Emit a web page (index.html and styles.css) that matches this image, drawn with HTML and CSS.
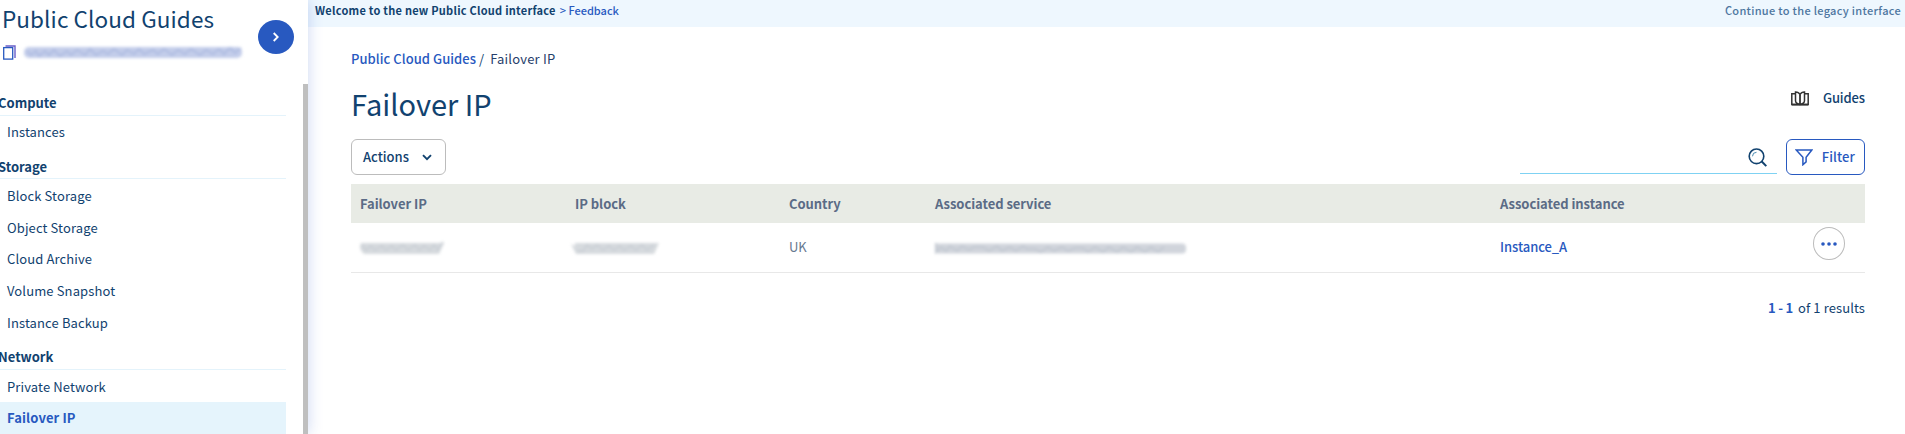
FILE: index.html
```html
<!DOCTYPE html>
<html lang="en">
<head>
<meta charset="utf-8">
<title>Failover IP</title>
<link rel="stylesheet" href="styles.css">
</head>
<body>
<div class="app">
  <aside class="sidebar">
    <header class="project">
      <div class="project-info">
        <div class="project-name">Public Cloud Guides</div>
        <div class="project-id">
          <svg class="copy-icon" width="13" height="15" viewBox="0 0 13 15" fill="none"><path d="M2.500 1h9.500v12" stroke="#6a5fc9" stroke-width="1.400"/><rect x=".7" y="2.600" width="9" height="11.500" stroke="#2859c0" stroke-width="1.300"/></svg>
          <svg class="masked" width="218" height="12" viewBox="0 0 218 12"><rect width="218" height="11" rx="5" fill="#c3cdea"/><path d="M3 4l4 4 5-4 3 5 6-5 4 4 5-5 6 6 7-5 4 4 6-5 8 5 5-6 6 6 7-4 5 3 6-5 8 6 5-5 7 4 5-5 5 5 9-4 5 4 6-5 8 6 6-5 7 4 6-5 9 6 6-5 7 4 6-5 5 5 6-6 5 5 6-5" fill="none" stroke="#afbce1" stroke-width="2"/></svg>
        </div>
      </div>
      <button class="toggle" aria-label="Toggle"><svg width="8" height="10" viewBox="0 0 8 10"><path d="M1.700 1l4 4-4 4" fill="none" stroke="#fff" stroke-width="1.800"/></svg></button>
    </header>
    <div class="nav-area">
      <nav class="nav">
        <div class="nav-head">Compute</div>
        <a class="nav-item">Instances</a>
        <div class="nav-head">Storage</div>
        <a class="nav-item">Block Storage</a>
        <a class="nav-item">Object Storage</a>
        <a class="nav-item">Cloud Archive</a>
        <a class="nav-item">Volume Snapshot</a>
        <a class="nav-item">Instance Backup</a>
        <div class="nav-head">Network</div>
        <a class="nav-item">Private Network</a>
        <a class="nav-item active">Failover IP</a>
      </nav>
      <div class="scrollbar"></div>
    </div>
  </aside>
  <main class="main">
    <div class="banner">
      <div class="welcome"><b>Welcome to the new Public Cloud interface</b><a class="feedback">&gt; Feedback</a></div>
      <a class="legacy">Continue to the legacy interface</a>
    </div>
    <div class="content">
      <div class="crumbs"><a class="crumb-link">Public Cloud Guides</a><span class="slash">/</span><span class="crumb-now">Failover IP</span></div>
      <div class="heading">
        <h1>Failover IP</h1>
        <a class="guides"><svg width="18" height="15" viewBox="0 0 18 15" fill="none" stroke="#333" stroke-width="1.500"><path d="M4 2.800H.8v10.700h16.400V2.800H14"/><path d="M9 3.500C8 1.500 6 1 4.500 1v8.500C4.500 12 6 13 9 13.500c3-.5 4.500-1.500 4.500-4V1C12 1 10 1.500 9 3.500z"/><path d="M9 3.500v10M.8 13.600h16.400" stroke-width="1.800"/></svg><span>Guides</span></a>
      </div>
      <div class="toolbar">
        <button class="btn actions"><span>Actions</span><svg width="10" height="7" viewBox="0 0 10 7"><path d="M1 1.200l4 4 4-4" fill="none" stroke="#11426f" stroke-width="1.900"/></svg></button>
        <div class="tools">
          <div class="search"><svg width="19" height="19" viewBox="0 0 19 19" fill="none" stroke="#11426f"><circle cx="8.500" cy="8.300" r="7.300" stroke-width="1.600"/><path d="M4.500 8.300a4 4 0 0 1 4-4" stroke-width="1" stroke="#4b8db4"/><path d="M13.500 13.300l4.800 4.800" stroke-width="2"/></svg></div>
          <button class="btn filter"><svg width="18" height="17" viewBox="0 0 18 17"><path d="M1.200 1h15.600l-5.700 7.300v4.500l-3.200 2.900V8.300z" fill="none" stroke="#2859c0" stroke-width="1.500"/></svg><span>Filter</span></button>
        </div>
      </div>
      <div class="row row-head">
        <span>Failover IP</span><span>IP block</span><span>Country</span><span>Associated service</span><span>Associated instance</span><span></span>
      </div>
      <div class="row row-body">
        <svg class="masked masked-ip" width="84" height="12" viewBox="0 0 84 12"><path d="M1 1h83l-5 11H4q-6-5-3-11z" fill="#d6dade"/><path d="M2 3l4 5 5-4 4 4 7-4 4 4 6-4 4 4 7-5 5 5 7-5 4 5 5-4 6 4 4-5 4 5 5-8" fill="none" stroke="#cbd0d6" stroke-width="2"/></svg>
        <svg class="masked masked-block" width="88" height="12" viewBox="0 0 88 12"><path d="M0 2l4 2V1h84l-5 11H5z" fill="#d6dade"/><path d="M6 9h6l4-6 5 4 5-4 6 5 6-4 5 4 6-4 4 4 7-4 5 4 6-5 5 5 7-5" fill="none" stroke="#cbd0d6" stroke-width="2"/></svg>
        <span class="country">UK</span>
        <svg class="masked masked-service" width="251" height="12" viewBox="0 0 251 12"><rect width="251" height="10" y="1.500" rx="4" fill="#d0d4db"/><path d="M1 1v9l5-5 5 4 4-5 7 5 5-5 7 4 5-3h9l6 4 8-5 5 5 8-4 6 4 7-5 4 3h8l6 3 7-5 6 4 8-4 6 4 7-3h8l5 4 7-5 8 5 6-5 8 5 6-5 8 5 6-5 8 5 6-5 7 5 6-5" fill="none" stroke="#c3c9d2" stroke-width="2"/></svg>
        <a class="instance">Instance_A</a>
        <button class="more" aria-label="More"><svg width="16" height="4" viewBox="0 0 16 4" fill="#2859c0"><circle cx="2" cy="2" r="1.800"/><circle cx="8" cy="2" r="1.800"/><circle cx="14" cy="2" r="1.800"/></svg></button>
      </div>
      <div class="results"><b>1 - 1</b><span>of 1 results</span></div>
    </div>
  </main>
</div>
</body>
</html>
```
FILE: styles.css
```css
* { box-sizing: border-box; }
body {
  margin: 0;
  background: #fff;
  color: #11426f;
  font: 13px/20px "Noto Sans CJK SC", "Noto Sans", sans-serif;
  overflow: hidden;
}
h1 { margin: 0; font-weight: 400; }
button { margin: 0; padding: 0; font: inherit; color: inherit; background: #fff; }
svg { display: block; flex: none; }
.app { display: flex; width: 1905px; height: 434px; overflow: hidden; }

.sidebar {
  position: relative;
  z-index: 1;
  width: 308px;
  flex: none;
  background: #fff;
  box-shadow: 0 0 14px rgba(40, 89, 200, .24);
}
.project { display: flex; justify-content: space-between; height: 84px; padding: 0 14px 0 3px; }
.project-name { margin: 3px 0 0 -1px; font-size: 22.500px; line-height: 30px; letter-spacing: .1px; white-space: nowrap; }
.project-id { display: flex; align-items: center; gap: 8px; margin-top: 12px; }
.masked { filter: blur(1.800px); overflow: visible; }
.toggle {
  display: flex; align-items: center; justify-content: center;
  width: 36px; height: 34px; margin-top: 20px;
  border: 0; border-radius: 50%; background: #2859c0;
}
.nav-area { display: flex; justify-content: space-between; height: 350px; }
.nav { width: 286px; }
.nav-head, .nav-item { display: block; height: 31.800px; white-space: nowrap; }
.nav-head { padding-top: 9px; border-bottom: 1px solid #e4f3fb; font-weight: 700; text-indent: -2px; }
.nav-item { padding: 6.500px 0 0 7px; letter-spacing: .12px; }
.nav-item.active { background: #e5f4fc; color: #2859c0; font-weight: 700; }
.scrollbar { width: 5px; background: #bfbfbf; }

.main { flex: 1; min-width: 0; }
.banner {
  display: flex; justify-content: space-between;
  height: 27px; padding: 0 4px 0 7px;
  background: #eef7fe; font-size: 11px;
}
.welcome { display: flex; gap: 4px; letter-spacing: .25px; }
.feedback { color: #2859c0; font-weight: 500; letter-spacing: 0; }
.legacy { color: #4d76a0; font-weight: 500; letter-spacing: .3px; }
.content { padding: 0 40px 0 43px; }
.crumbs { display: flex; height: 40px; padding-top: 22px; }
.crumb-link { color: #2859c0; font-weight: 500; letter-spacing: .05px; }
.slash { margin: 0 6px 0 3px; }
.crumb-now { color: #27406b; letter-spacing: .2px; }
.heading { display: flex; justify-content: space-between; height: 72px; padding-top: 16px; }
h1 { font-size: 29px; line-height: 40px; }
.guides { display: flex; align-items: center; gap: 14px; height: 30px; font-weight: 500; letter-spacing: -.1px; }
.toolbar { display: flex; justify-content: space-between; height: 45px; }
.tools { display: flex; gap: 9px; }
.btn { display: flex; align-items: center; height: 36px; border-radius: 6px; font-weight: 500; }
.actions { width: 95px; padding: 0 13px 0 11px; justify-content: space-between; border: 1px solid #bcbcbc; }
.search { display: flex; justify-content: flex-end; width: 257px; height: 35px; padding: 9px 10px 0 0; border-bottom: 1px solid #7fd2f3; }
.filter { width: 79px; padding: 0 9px 0 8px; justify-content: space-between; border: 1px solid #2859c0; color: #2859c0; letter-spacing: .1px; }
.row { display: grid; grid-template-columns: 215px 214px 146px 565px 313px 32px; padding-left: 9px; }
.row-head { height: 39px; padding-top: 10px; background: #e8ebe5; color: #5b6b86; font-weight: 700; letter-spacing: -.05px; }
.row-body { height: 50px; padding-top: 4px; border-bottom: 1px solid #e8e8e8; }
.masked-ip, .masked-service, .masked-block { margin-top: 15px; }
.masked-block { margin-left: -4px; }
.country { margin-top: 10px; color: #66788f; }
.instance { margin-top: 10px; color: #2859c0; font-weight: 500; letter-spacing: -.05px; }
.more { display: flex; align-items: center; justify-content: center; width: 32px; height: 33px; border: 1px solid #bcbcbc; border-radius: 50%; }
.results { display: flex; justify-content: flex-end; gap: 5px; margin-top: 25px; letter-spacing: .1px; }
.results b { color: #2859c0; letter-spacing: -.2px; }
```
